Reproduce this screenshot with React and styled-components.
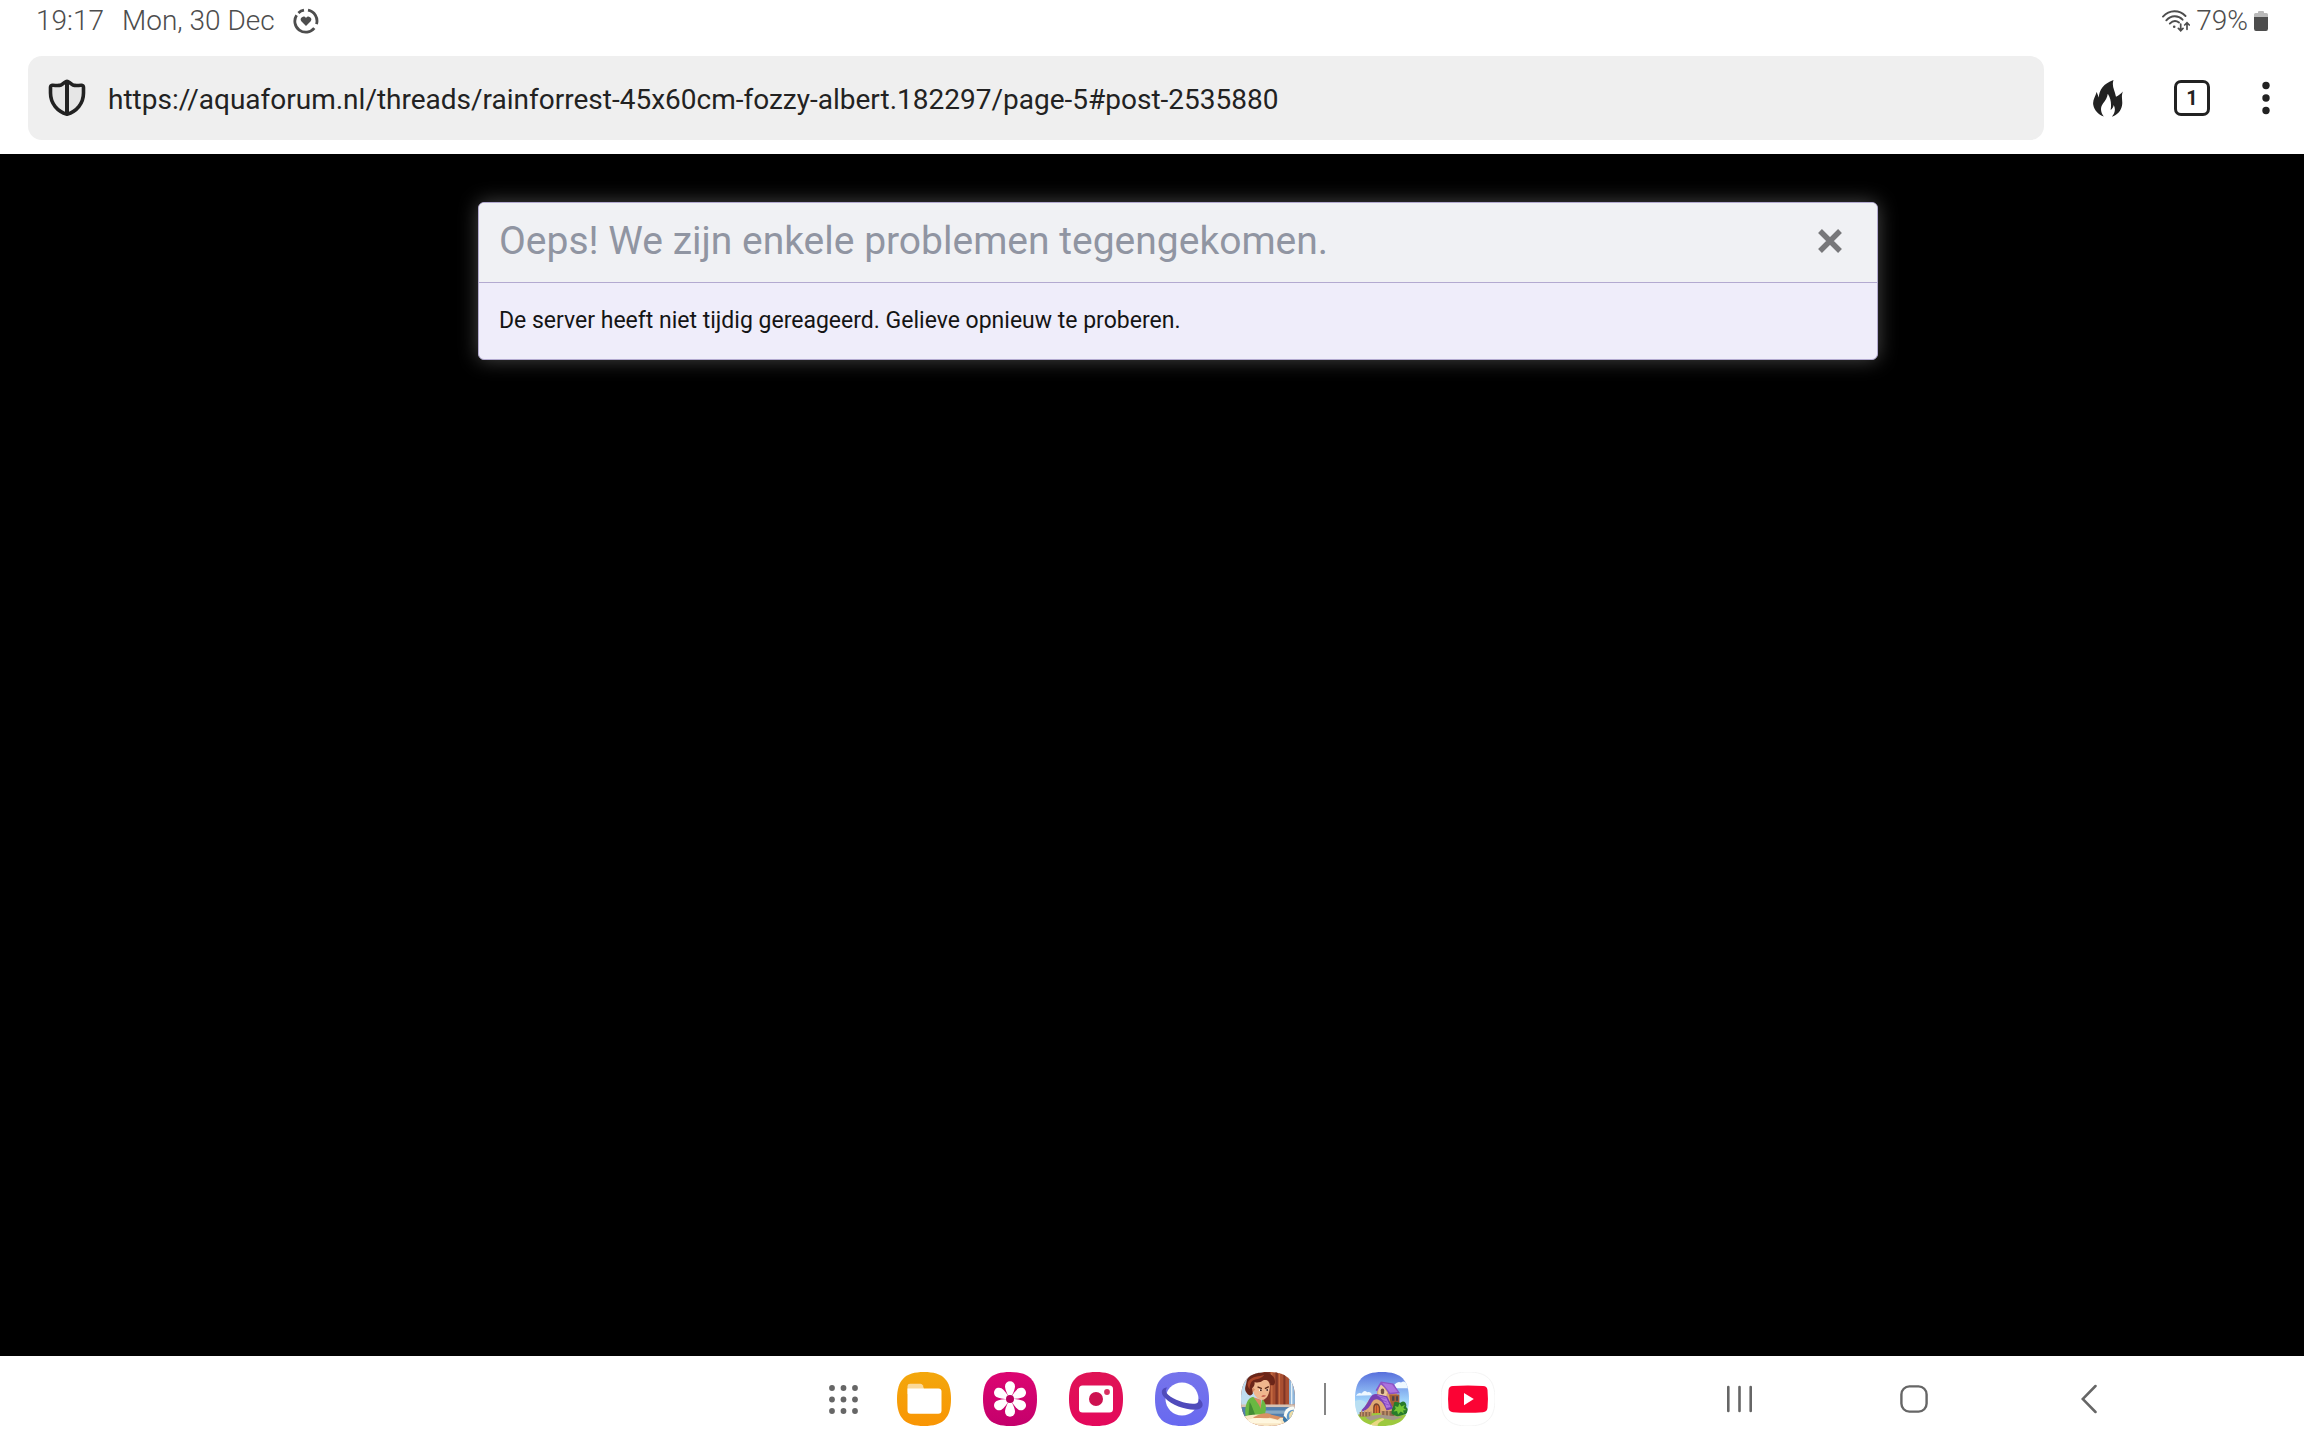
import React, { useId } from "react";
import styled, { createGlobalStyle } from "styled-components";

const GlobalStyle = createGlobalStyle`
  *, *::before, *::after { box-sizing: border-box; }
  body {
    margin: 0;
    background: #000;
    font-family: Roboto, "Noto Sans", sans-serif;
  }
  button, input { font: inherit; color: inherit; }
  svg { display: block; }
`;

const Screen = styled.div`
  display: flex;
  flex-direction: column;
  min-height: 100vh;
`;

const StatusBar = styled.header`
  display: flex;
  justify-content: space-between;
  align-items: center;
  height: 42px;
  padding: 0 36px;
  background: #fff;
  color: #4d4d4d;
  font-size: 28px;
  font-weight: 300;
  line-height: 42px;
`;

const StatusGroup = styled.div`
  display: flex;
  align-items: center;
  gap: ${(p) => p.$gap}px;
`;

const BrowserBar = styled.div`
  display: flex;
  align-items: center;
  gap: 44px;
  padding: 14px 28px;
  background: #fff;
  color: #222;
`;

const AddressForm = styled.form`
  flex: 1;
  display: flex;
  align-items: center;
  gap: 22px;
  height: 84px;
  padding: 0 20px;
  border-radius: 14px;
  background: #efefef;
`;

const AddressInput = styled.input`
  flex: 1;
  min-width: 0;
  padding: 4px 0 0;
  border: 0;
  outline: 0;
  background: transparent;
  font-size: 28px;
  line-height: 40px;
`;

const BarActions = styled.div`
  display: flex;
  align-items: center;
  gap: 37px;
`;

const IconButton = styled.button`
  display: flex;
  align-items: center;
  justify-content: center;
  flex: none;
  width: ${(p) => p.$width}px;
  height: 54px;
  padding: 0;
  border: 0;
  background: transparent;
  cursor: pointer;
`;

const TabCount = styled.span`
  display: flex;
  align-items: center;
  justify-content: center;
  width: 36px;
  height: 36px;
  border: 3px solid #222;
  border-radius: 7px;
  font-size: 20px;
  font-weight: 700;
  line-height: 24px;
`;

const Page = styled.main`
  flex: 1;
  padding: 48px 0 48px 52px;
  background: #000;
`;

const Overlay = styled.section`
  max-width: 1400px;
  margin: 0 auto;
  border: 1px solid #b3aad0;
  border-radius: 6px;
  overflow: hidden;
  background: #efedfa;
  box-shadow: 0 0 20px rgba(255, 255, 255, 0.28);
`;

const OverlayHeader = styled.div`
  display: flex;
  align-items: center;
  justify-content: space-between;
  height: 80px;
  padding: 0 20px 4px;
  border-bottom: 1px solid #b3aad0;
  background: #f0f1f4;
`;

const OverlayTitle = styled.h1`
  margin: 0;
  color: #9095a2;
  font-size: 39px;
  font-weight: 400;
  line-height: 56px;
`;

const OverlayText = styled.p`
  margin: 0;
  padding: 22px 20px;
  color: #141414;
  font-size: 23px;
  line-height: 32px;
`;

const BottomBar = styled.footer`
  display: grid;
  grid-template-columns: 1fr auto 1fr;
  align-items: center;
  height: 84px;
  padding-top: 2px;
  background: #fff;
`;

const Dock = styled.nav`
  grid-column: 2;
  display: flex;
  align-items: center;
  gap: 29px;
  padding-left: 12px;
`;

const DockGroup = styled.div`
  display: flex;
  gap: 32px;
`;

const DockDivider = styled.span`
  width: 2px;
  height: 32px;
  background: #858585;
`;

const SystemNav = styled.nav`
  display: flex;
  justify-content: flex-end;
  gap: 121px;
  padding-right: 188px;
`;

const squircle = "M27 0C8 0 0 8 0 27S8 54 27 54 54 46 54 27 46 0 27 0Z";

function Tile({ from, to, outline, children }) {
  const id = useId();
  return (
    <svg width="54" height="54" viewBox="0 0 54 54" aria-hidden="true">
      <defs>
        <linearGradient id={id} x1="0" y1="0" x2="0" y2="1">
          <stop offset="0" stopColor={from} />
          <stop offset="1" stopColor={to} />
        </linearGradient>
      </defs>
      <path d={squircle} fill={`url(#${id})`} stroke={outline} />
      {children}
    </svg>
  );
}

/* Painted icons are drawn on a 163-unit square and clipped to the tile. */
function PaintedTile({ children }) {
  const id = useId();
  return (
    <svg width="54" height="54" viewBox="0 0 163 163" aria-hidden="true">
      <clipPath id={id}>
        <path d={squircle} transform="scale(3.0185)" />
      </clipPath>
      <g clipPath={`url(#${id})`}>{children}</g>
    </svg>
  );
}

function HeartRing() {
  return (
    <svg width="26" height="26" viewBox="0 0 26 26" aria-hidden="true" fill="none" stroke="#4d4d4d" strokeWidth="2.8">
      <path d="M15 2.200A11 11 0 0 1 23.500 16.200" />
      <path d="M21.300 20.200A11 11 0 0 1 3.600 7.200" />
      <path d="M5.400 5A11 11 0 0 1 11 2.200" />
      <path d="M13 18L8.300 13.300A2.600 2.600 0 0 1 13 10A2.600 2.600 0 0 1 17.700 13.300Z" fill="#4d4d4d" stroke="none" />
    </svg>
  );
}

function Wifi() {
  return (
    <svg width="28" height="22" viewBox="0 0 28 22" aria-hidden="true" fill="none" stroke="#4d4d4d" strokeWidth="1.9" strokeLinecap="round">
      <path d="M1 6.6C7.5-.4 17.2-.4 23.5 6" />
      <path d="M4.3 10.3C9 5 16.2 5 20.6 9.7" />
      <path d="M7.8 13.6C11 10.3 14.4 10.5 17 12.6" />
      <circle cx="12.2" cy="16.8" r="1.3" fill="#4d4d4d" stroke="none" />
      <path d="M18.7 14V20.4M16.4 18.4L18.7 20.7L21 18.4M25 19.3V13M22.7 15L25 12.7L27.3 15" strokeWidth="1.7" />
    </svg>
  );
}

function Battery() {
  return (
    <svg width="14" height="20" viewBox="0 0 14 20" aria-hidden="true">
      <path d="M4 1.2Q4 0 5 0H9Q10 0 10 1.2V2H12.5Q14 2 14 3.5V7H0V3.5Q0 2 1.5 2H4Z" fill="#b9b9b9" />
      <path d="M0 6H14V17.5Q14 20 12 20H2Q0 20 0 17.5Z" fill="#4d4d4d" />
    </svg>
  );
}

function Shield() {
  return (
    <svg width="38" height="38" viewBox="0 0 38 38" aria-hidden="true">
      <path d="M19 2.2C20.8 2.2 22 4.8 25 6C28.500 7.300 31 6 33.800 6.300Q35.500 6.500 35.500 8.500V14C35.500 24.500 28.500 32.500 19 35.200C9.500 32.500 2.500 24.500 2.500 14V8.500Q2.500 6.500 4.200 6.300C7 6 9.500 7.300 13 6C16 4.800 17.200 2.200 19 2.200Z" fill="#e6e6e6" stroke="#222" strokeWidth="3.6" strokeLinejoin="round" />
      <path d="M19 2.500V35" stroke="#222" strokeWidth="4" />
    </svg>
  );
}

function Flame() {
  return (
    <svg width="30" height="37" viewBox="0 0 30 37" aria-hidden="true">
      <path d="M20.500 0C18.500 6 21.500 9.500 23 16.800C25.800 15.500 27.600 14 29.800 11.500C27.800 18 30 20 29 25.500C28 31 24.500 34.800 18.800 36.800C22 33 22.800 29.500 20.800 25C20.300 27.200 19.500 28.800 17.600 30C18.600 24.500 18 18.500 14.800 13.800C14.200 18 12.500 20.500 10 23.500C7 27.500 7.500 32.500 10.800 36.500C5.500 34.500 1.200 30.500 .3 25C-.7 19.800 2.600 16.500 3.600 12C4.600 14 5 15.500 5.800 17.500C6.200 10 10.500 3.500 20.500 0Z" fill="#222" />
    </svg>
  );
}

function MoreDots() {
  return (
    <svg width="8" height="36" viewBox="0 0 8 36" aria-hidden="true" fill="#222">
      <circle cx="4" cy="5.500" r="3.700" />
      <circle cx="4" cy="18" r="3.700" />
      <circle cx="4" cy="30.500" r="3.700" />
    </svg>
  );
}

function Cross() {
  return (
    <svg width="26" height="26" viewBox="0 0 26 26" aria-hidden="true">
      <path d="M3 3L23 23M23 3L3 23" stroke="#77777a" strokeWidth="5.400" />
    </svg>
  );
}

function AppsGrid() {
  const steps = [3, 14.500, 26];
  return (
    <svg width="29" height="29" viewBox="0 0 29 29" aria-hidden="true" fill="#666">
      {steps.map((y) => steps.map((x) => <circle key={`${x}-${y}`} cx={x} cy={y} r="2.900" />))}
    </svg>
  );
}

function FilesIcon() {
  return (
    <Tile from="#f3a70c" to="#f99504">
      <path d="M10.500 20V14Q10.500 11.700 13 11.700H23.500Q25.200 11.700 25.800 13.200L27 17V22H10.500Z" fill="#fbd999" />
      <path d="M10.500 16.500H41.500Q44.500 16.500 44.500 19.500V38.500Q44.500 41.800 41.200 41.800H13.800Q10.500 41.800 10.500 38.500Z" fill="#fff" />
    </Tile>
  );
}

function GalleryIcon() {
  return (
    <Tile from="#dc0571" to="#c4006c">
      {[0, 60, 120, 180, 240, 300].map((turn) => (
        <path key={turn} d="M27 27C24 22 22 17 22 14.300A5 5 0 0 1 32 14.300C32 17 30 22 27 27Z" fill="#fff" transform={`rotate(${turn} 27 27)`} />
      ))}
      <circle cx="27" cy="27" r="4" fill="#b8005f" />
    </Tile>
  );
}

function CameraIcon() {
  return (
    <Tile from="#df1455" to="#e4085c">
      <rect x="10" y="13.500" width="34" height="27" rx="3.500" fill="#fff" />
      <circle cx="27" cy="27" r="7" fill="#cd1150" />
      <circle cx="38" cy="20" r="2.900" fill="#d83060" />
    </Tile>
  );
}

function BrowserIcon() {
  return (
    <Tile from="#7674eb" to="#6869f0">
      <circle cx="27" cy="27" r="16.500" fill="#fff" />
      <path d="M12.300 15.500C6 15.500 5 21.500 10 26C17 33.500 32 38.500 42 37.500C49 36.500 49.500 30.500 43.500 26.500C44.500 29.500 43 31.800 38 31.800C30 31.800 18.500 27.500 13.500 23C10.500 20.500 10 17.500 12.300 15.500Z" fill="#504bbb" />
    </Tile>
  );
}

function CookingGameIcon() {
  return (
    <PaintedTile>
      <rect width="163" height="163" fill="#a94f31" />
      <rect width="65" height="100" fill="#bfdcef" />
      <path d="M70 0H88V100H70ZM104 0H111V100H104ZM128 0H134V100H128Z" fill="#7e3526" />
      <path d="M91 0H95V100H91ZM114 0H118V100H114Z" fill="#c76e43" />
      <path d="M145 0H163V98H145Z" fill="#8fb7dc" />
      <path d="M151 0H155V98H151Z" fill="#eaf3f7" />
      <rect y="98" width="163" height="9" fill="#d6c3b4" />
      <rect y="106" width="163" height="30" fill="#527fae" />
      <path d="M60 116H145V126H60Z" fill="#87a9c5" />
      <path d="M38 76L61 84V112H31Z" fill="#d98b65" />
      <path d="M14 134C10 104 18 78 37 75C47 90 58 102 59 112L63 83C77 89 78 113 71 132L45 138Z" fill="#69b842" />
      <path d="M26 90C34 102 37 118 45 134L22 139Z" fill="#438c35" />
      <path d="M35 28C45 11 83 15 87 39C88 66 77 85 62 84C46 82 30 63 35 28Z" fill="#efb68d" />
      <path d="M36 60C31 65 28 49 35 47L43 53Z" fill="#d98e67" />
      <path d="M18 64C8 54 14 43 16 33C18 13 35 1 57 3C82-3 101 11 102 25C105 38 97 43 88 39C90 26 80 22 67 25C60 31 49 34 41 30C42 41 38 46 33 49L36 65C29 74 23 71 18 64Z" fill="#6b2518" />
      <path d="M22 29C35 9 55 16 70 8C64 20 48 20 37 25C29 29 26 42 26 52C20 45 18 37 22 29Z" fill="#a84428" />
      <path d="M50 45L63 50M72 50L84 44" stroke="#592716" strokeWidth="4" />
      <ellipse cx="59" cy="55" rx="5" ry="3" fill="#fff" />
      <ellipse cx="79" cy="54" rx="4" ry="3" fill="#fff" />
      <circle cx="60" cy="55" r="3" fill="#4d2519" />
      <circle cx="79" cy="54" r="3" fill="#4d2519" />
      <path d="M61 73Q68 68 76 72Q68 77 61 73Z" fill="#bc4c42" />
      <path d="M0 163V139C29 125 62 127 95 134L137 139L145 163Z" fill="#f8e7c5" />
      <path d="M47 132C61 124 78 121 92 129L122 136L111 144L87 138L59 144L36 137Z" fill="#d99164" />
      <path d="M18 145C47 134 84 139 119 147L122 155H18Z" fill="#fff7df" />
      <ellipse cx="155" cy="132" rx="26" ry="28" fill="#f9fbf5" />
      <ellipse cx="157" cy="135" rx="19" ry="21" fill="#5f9acb" />
      <ellipse cx="159" cy="132" rx="14" ry="15" fill="#eddca6" />
      <path d="M129 132L144 148L137 161L126 145Z" fill="#3a77a7" />
    </PaintedTile>
  );
}

function CottageGameIcon() {
  const id = useId();
  return (
    <PaintedTile>
      <linearGradient id={id} x1="0" y1="0" x2="0" y2="1">
        <stop offset="0" stopColor="#5870dc" />
        <stop offset=".6" stopColor="#9ed1fa" />
        <stop offset="1" stopColor="#d5efff" />
      </linearGradient>
      <rect width="163" height="140" fill={`url(#${id})`} />
      <path d="M3 72Q9 60 20 65Q27 52 37 61Q49 59 51 70ZM119 38Q129 27 139 32Q149 24 163 37V49H122Z" fill="#eef8ff" />
      <path d="M0 88Q22 78 37 98V130H0Z" fill="#b9dff2" />
      <path d="M67 59L85 34L127 66V112H67Z" fill="#d9a26b" />
      <path d="M71 46L80 36L97 61L91 86H69Z" fill="#edcaa0" />
      <rect x="78" y="50" width="10" height="17" rx="5" fill="#725044" />
      <path d="M78 29L116 35L136 64L102 68Q95 50 78 38L67 58L62 55Z" fill="#8d52c5" />
      <path d="M82 33L112 38L129 60L106 63Z" fill="#ad72dd" />
      <path d="M103 68H134V105H109Z" fill="#a65f36" />
      <path d="M112 73H119V87H112ZM124 73H130V87H124Z" fill="#4b424c" />
      <path d="M34 97Q46 72 64 76Q86 84 93 112L113 111V137H30V108Z" fill="#dfaa72" />
      <path d="M20 115Q37 97 43 82Q52 64 68 67L97 73L116 111L95 116Q86 92 75 86Q60 77 51 91Q45 109 23 120Z" fill="#7941b1" />
      <path d="M65 69L94 77L108 106L95 109Q87 82 65 69Z" fill="#b073df" />
      <path d="M71 75L92 80M77 83L97 91M86 94L103 100" stroke="#7d47b9" strokeWidth="2" />
      <path d="M55 127V108Q55 94 65 94Q75 96 76 109V128Z" fill="#74402e" />
      <path d="M59 126V109Q60 99 66 99Q72 101 72 110V127Z" fill="#dc7035" />
      <path d="M65 99V127" stroke="#8d3e27" strokeWidth="2" />
      <path d="M0 130Q61 117 163 130V163H0Z" fill="#9dc93e" />
      <path d="M14 121H49V134H14ZM79 118H119V134H79Z" fill="#8d654c" />
      <path d="M20 116V134M29 116V134M39 116V134M48 118V134M80 117V133M91 117V133M102 117V133" stroke="#c4976e" strokeWidth="4" />
      <path d="M111 127C107 111 120 102 117 93C126 84 132 97 139 91C150 85 158 97 154 106C165 113 157 130 149 128L128 134Z" fill="#277b2b" />
      <path d="M116 119L123 111L120 103L130 106L134 95L140 104L151 99L146 109L155 115L145 116L148 125L138 119L130 128L127 118Z" fill="#75c736" />
      <path d="M31 137Q62 127 85 130L145 136L116 146L76 138L47 147Z" fill="#a4988b" />
      <path d="M43 163Q54 149 80 140Q91 139 87 145Q66 154 68 163Z" fill="#e9d783" />
    </PaintedTile>
  );
}

function YouTubeIcon() {
  return (
    <Tile from="#fff" to="#fff" outline="#f4f4f4">
      <path d="M12 14Q27 12.800 42 14Q46 14.200 46.500 18Q47.400 27 46.500 36Q46 39.800 42 40.200Q27 41.200 12 40.200Q8 39.800 7.500 36Q6.600 27 7.500 18Q8 14.200 12 14Z" fill="#fb0334" />
      <path d="M23 21V33.200L32.800 27.100Z" fill="#fff" />
    </Tile>
  );
}

function RecentsIcon() {
  return (
    <svg width="27" height="28" viewBox="0 0 27 28" aria-hidden="true" stroke="#666" strokeWidth="2.600" strokeLinecap="round">
      <path d="M2.300 2V26M13.500 2V26M24.700 2V26" />
    </svg>
  );
}

function HomeIcon() {
  return (
    <svg width="28" height="28" viewBox="0 0 28 28" aria-hidden="true">
      <rect x="1.400" y="1.400" width="25.200" height="25.200" rx="8" fill="none" stroke="#666" strokeWidth="2.400" />
    </svg>
  );
}

function BackIcon() {
  return (
    <svg width="16" height="30" viewBox="0 0 16 30" aria-hidden="true">
      <path d="M14.500 2L1.700 15L14.500 28" fill="none" stroke="#666" strokeWidth="2.500" strokeLinecap="round" />
    </svg>
  );
}

const favourites = [
  { label: "Files", Icon: FilesIcon },
  { label: "Gallery", Icon: GalleryIcon },
  { label: "Camera", Icon: CameraIcon },
  { label: "Internet", Icon: BrowserIcon },
  { label: "Cooking game", Icon: CookingGameIcon },
];

const recents = [
  { label: "Cottage game", Icon: CottageGameIcon },
  { label: "YouTube", Icon: YouTubeIcon },
];

const systemKeys = [
  { label: "Recent apps", Icon: RecentsIcon },
  { label: "Home", Icon: HomeIcon },
  { label: "Back", Icon: BackIcon },
];

function IconButtons({ items }) {
  return items.map(({ label, Icon }) => (
    <IconButton key={label} type="button" aria-label={label} $width={54}>
      <Icon />
    </IconButton>
  ));
}

export default function App() {
  return (
    <Screen>
      <GlobalStyle />
      <StatusBar>
        <StatusGroup $gap={18}>
          <time>19:17</time>
          <span>Mon, 30 Dec</span>
          <HeartRing />
        </StatusGroup>
        <StatusGroup $gap={6}>
          <Wifi />
          <span>79%</span>
          <Battery />
        </StatusGroup>
      </StatusBar>

      <BrowserBar>
        <AddressForm onSubmit={(e) => e.preventDefault()}>
          <IconButton type="button" aria-label="Tracking protection" $width={38}>
            <Shield />
          </IconButton>
          <AddressInput
            aria-label="Address"
            type="text"
            spellCheck={false}
            defaultValue="https://aquaforum.nl/threads/rainforrest-45x60cm-fozzy-albert.182297/page-5#post-2535880"
          />
        </AddressForm>
        <BarActions>
          <IconButton type="button" aria-label="Clear data" $width={40}>
            <Flame />
          </IconButton>
          <IconButton type="button" aria-label="Tabs" $width={54}>
            <TabCount>1</TabCount>
          </IconButton>
          <IconButton type="button" aria-label="Menu" $width={20}>
            <MoreDots />
          </IconButton>
        </BarActions>
      </BrowserBar>

      <Page>
        <Overlay role="alertdialog" aria-labelledby="overlay-title" aria-describedby="overlay-text">
          <OverlayHeader>
            <OverlayTitle id="overlay-title">Oeps! We zijn enkele problemen tegengekomen.</OverlayTitle>
            <IconButton type="button" aria-label="Sluiten" $width={54}>
              <Cross />
            </IconButton>
          </OverlayHeader>
          <OverlayText id="overlay-text">
            De server heeft niet tijdig gereageerd. Gelieve opnieuw te proberen.
          </OverlayText>
        </Overlay>
      </Page>

      <BottomBar>
        <Dock aria-label="Apps">
          <DockGroup>
            <IconButton type="button" aria-label="All apps" $width={44}>
              <AppsGrid />
            </IconButton>
            <IconButtons items={favourites} />
          </DockGroup>
          <DockDivider />
          <DockGroup>
            <IconButtons items={recents} />
          </DockGroup>
        </Dock>
        <SystemNav aria-label="System">
          <IconButtons items={systemKeys} />
        </SystemNav>
      </BottomBar>
    </Screen>
  );
}
